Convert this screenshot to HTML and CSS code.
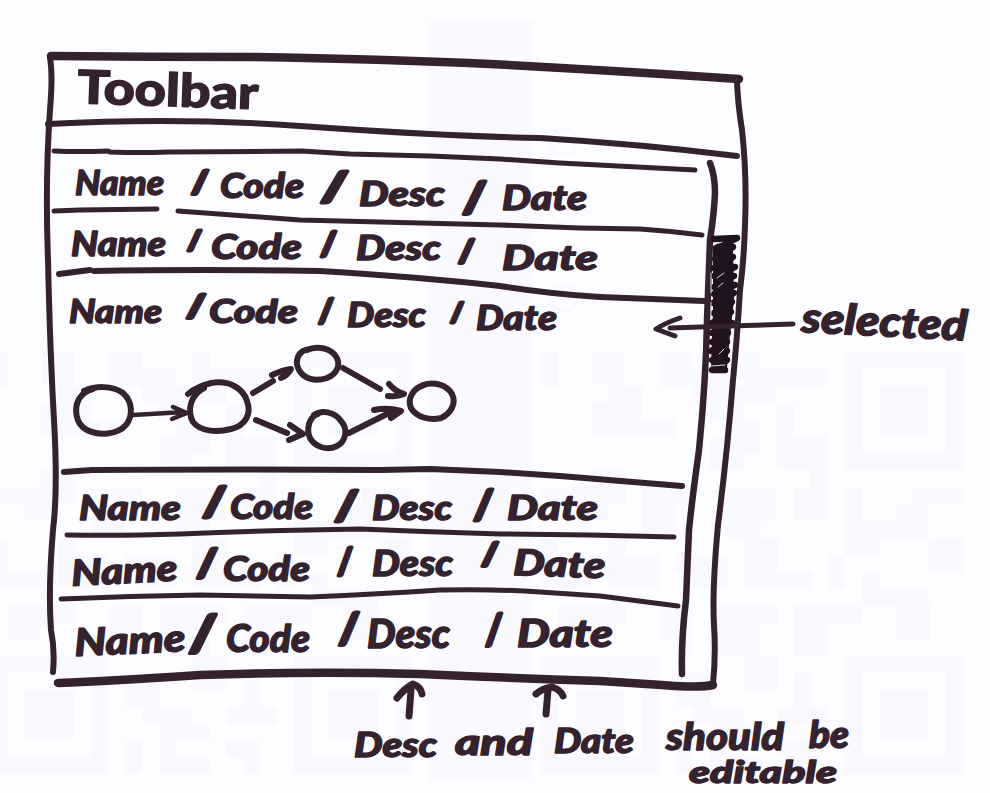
FILE: index.html
```html
<!DOCTYPE html>
<html lang="en">
<head>
<meta charset="utf-8">
<title>Toolbar</title>
<link rel="stylesheet" href="styles.css">
</head>
<body>
<main class="paper">
  <!-- Faint print showing through the paper -->
  <svg class="ghost" viewBox="0 0 990 793" aria-hidden="true">
    <rect class="band" x="427" y="20" width="107" height="762"/>
    <defs>
      <g id="finder"><path d="M0 0h118v118h-118zM17 17v84h84v-84z" fill-rule="evenodd"/><rect x="34" y="34" width="50" height="50"/></g>
      <g id="code">
        <use href="#finder" x="304"/><use href="#finder" x="304" y="304"/><use href="#finder" y="304"/>
        <path d="M0 0h17v34h-17zM52 0h32v34h17v50h-50v-34h17v-17h-16zM118 0h34v34h-34zM152 17h34v17h17v34h-34v-17h-17zM203 0h17v17h66v17h-50v17h-33zM101 68h33v17h-33zM186 68h34v34h-17v16h-34v-33h17zM236 51h17v33h33v51h-17v-17h-33zM0 135h34v17h-34zM51 118h34v34h-17v17h-34v-34h17zM101 135h51v17h-17v34h-34zM186 135h50v34h-16v17h-34zM253 135h34v34h-34zM304 135h17v34h34v-17h17v-17h50v17h-34v34h-50v17h-34zM0 186h17v34h34v17h-51zM68 186h17v17h33v34h-50zM135 203h51v34h-34v-17h-17zM203 186h34v34h34v17h-68zM287 203h17v34h-17zM321 220h17v17h50v17h-67zM388 186h34v34h-34zM17 254h68v17h-34v17h-34zM118 254h34v50h-17v-17h-17zM169 254h68v17h-17v34h-51zM253 254h68v17h-34v34h-34zM355 254h34v34h-34zM135 321h34v34h34v17h-51v-17h-17zM203 304h34v34h-34zM253 321h17v34h17v17h-50v-17h16zM135 389h17v33h-17zM169 372h51v17h-34v17h34v16h-51zM236 389h34v33h-17v-16h-17z"/>
      </g>
    </defs>
    <use href="#code" x="541" y="352"/><use href="#code" x="-10" y="352"/>
    <g class="ring"><circle cx="563" cy="142" r="13"/><circle cx="563" cy="208" r="14"/><circle cx="563" cy="298" r="13"/></g>
  </svg>

  <header class="strip toolbar">
    <svg viewBox="0 0 990 140">
      <g class="words upright">
        <text x="77" y="103" font-size="46" textLength="181" lengthAdjust="spacingAndGlyphs" transform="rotate(2 77 103)">Toolbar</text>
      </g>
      <path class="heavy" d="M51 56Q150 57 250 57Q380 59 490 64Q620 71 739 79"/>
      <path d="M48 124Q105 121 160 121Q230 121 300 126T430 134Q490 137 540 138Q640 144 737 156"/>
    </svg>
  </header>

  <section class="list">
    <div class="strip row">
      <svg viewBox="0 140 990 76">
        <path class="fine" d="M54 151Q80 152 108 151L110 152Q140 153 168 152L172 152Q240 152 302 151L350 154L430 156L500 159L560 163L695 170"/>
        <g class="words">
          <text x="75" y="195" font-size="34" textLength="89" lengthAdjust="spacingAndGlyphs">Name</text>
          <text class="bar" x="191" y="193" font-size="30" textLength="18" lengthAdjust="spacingAndGlyphs">/</text>
          <text x="220" y="198" font-size="34" textLength="84" lengthAdjust="spacingAndGlyphs">Code</text>
          <text class="bar" x="320" y="201" font-size="40" textLength="29" lengthAdjust="spacingAndGlyphs">/</text>
          <text x="359" y="206" font-size="34" textLength="86" lengthAdjust="spacingAndGlyphs">Desc</text>
          <text class="bar" x="462" y="212" font-size="41" textLength="25" lengthAdjust="spacingAndGlyphs">/</text>
          <text x="502" y="210" font-size="34" textLength="85" lengthAdjust="spacingAndGlyphs">Date</text>
        </g>
        <path class="fine" d="M54 211L80 210L157 209M178 211L260 217L300 220L500 225L580 228L640 229Q670 231 702 235"/>
      </svg>
    </div>
    <div class="strip row row-short">
      <svg viewBox="0 216 990 64">
        <g class="words">
          <text x="71" y="256" font-size="34" textLength="95" lengthAdjust="spacingAndGlyphs">Name</text>
          <text class="bar" x="187" y="250" font-size="27" textLength="15" lengthAdjust="spacingAndGlyphs">/</text>
          <text x="211" y="259" font-size="34" textLength="91" lengthAdjust="spacingAndGlyphs">Code</text>
          <text class="bar" x="320" y="255" font-size="33" textLength="17" lengthAdjust="spacingAndGlyphs">/</text>
          <text x="356" y="260" font-size="35" textLength="85" lengthAdjust="spacingAndGlyphs">Desc</text>
          <text class="bar" x="458" y="262" font-size="31" textLength="17" lengthAdjust="spacingAndGlyphs">/</text>
          <text x="502" y="270" font-size="35" textLength="96" lengthAdjust="spacingAndGlyphs">Date</text>
        </g>
        <path d="M59 274L90 270M94 271Q200 269 320 271Q420 277 500 286Q550 294 600 297L704 301"/>
      </svg>
    </div>
    <div class="strip row selected">
      <svg viewBox="0 280 990 190">
        <g class="words">
          <text x="69" y="323" font-size="33" textLength="93" lengthAdjust="spacingAndGlyphs">Name</text>
          <text class="bar" x="186" y="317" font-size="31" textLength="20" lengthAdjust="spacingAndGlyphs">/</text>
          <text x="209" y="323" font-size="32" textLength="89" lengthAdjust="spacingAndGlyphs">Code</text>
          <text class="bar" x="318" y="322" font-size="33" textLength="16" lengthAdjust="spacingAndGlyphs">/</text>
          <text x="347" y="327" font-size="35" textLength="79" lengthAdjust="spacingAndGlyphs">Desc</text>
          <text class="bar" x="450" y="322" font-size="27" textLength="14" lengthAdjust="spacingAndGlyphs">/</text>
          <text x="476" y="330" font-size="35" textLength="81" lengthAdjust="spacingAndGlyphs">Date</text>
          <text x="801" y="332" font-size="42" textLength="166" lengthAdjust="spacingAndGlyphs" transform="rotate(3 801 332)">selected</text>
        </g>
        <g class="graph">
          <path d="M84 391C95 386 112 385 123 393C133 402 133 416 126 425C117 435 99 436 87 430C75 424 74 408 79 399Q84 391 93 389"/>
          <path d="M188 394Q198 386 211 383C229 380 243 388 247 401C252 414 245 426 231 429C216 433 200 431 193 422C187 411 190 395 204 388"/>
          <path d="M307 350C315 346 328 347 335 355C342 364 337 374 327 378C315 382 304 379 299 370C294 361 298 350 310 349"/>
          <path d="M314 415C321 410 334 411 341 421C349 430 345 442 337 446C327 451 315 447 310 438C306 429 309 417 318 414"/>
          <path d="M423 385C434 381 447 385 452 394C457 404 450 414 441 418C430 421 416 417 411 408C407 399 413 388 424 385"/>
          <path class="fine" d="M133 415L184 412M173 407L187 413L172 419"/>
          <path d="M253 393L273 381M272 375Q283 370 291 369Q287 376 281 378M256 420L287 433M290 425L303 434L289 440M343 368L380 389M389 384Q396 392 404 394Q397 397 388 396M349 433L393 411M374 410Q387 407 401 411L391 418"/>
        </g>
        <path d="M64 472L92 470Q250 469 380 470L430 469L500 472L560 476L682 486"/>
      </svg>
    </div>
    <div class="strip row">
      <svg viewBox="0 470 990 65">
        <g class="words">
          <text x="79" y="520" font-size="35" textLength="102" lengthAdjust="spacingAndGlyphs">Name</text>
          <text class="bar" x="202" y="516" font-size="40" textLength="25" lengthAdjust="spacingAndGlyphs">/</text>
          <text x="230" y="519" font-size="34" textLength="83" lengthAdjust="spacingAndGlyphs">Code</text>
          <text class="bar" x="334" y="520" font-size="40" textLength="25" lengthAdjust="spacingAndGlyphs">/</text>
          <text x="372" y="520" font-size="34" textLength="80" lengthAdjust="spacingAndGlyphs">Desc</text>
          <text class="bar" x="473" y="519" font-size="40" textLength="21" lengthAdjust="spacingAndGlyphs">/</text>
          <text x="507" y="520" font-size="35" textLength="91" lengthAdjust="spacingAndGlyphs">Date</text>
        </g>
        <path class="fine" d="M67 535Q120 536 180 534Q280 530 360 529Q430 532 500 534L590 535L674 537"/>
      </svg>
    </div>
    <div class="strip row row-short">
      <svg viewBox="0 535 990 63">
        <g class="words">
          <text x="72" y="586" font-size="36" textLength="106" lengthAdjust="spacingAndGlyphs" transform="rotate(-3 72 586)">Name</text>
          <text class="bar" x="196" y="576" font-size="38" textLength="22" lengthAdjust="spacingAndGlyphs">/</text>
          <text x="223" y="581" font-size="35" textLength="87" lengthAdjust="spacingAndGlyphs">Code</text>
          <text class="bar" x="337" y="574" font-size="36" textLength="16" lengthAdjust="spacingAndGlyphs">/</text>
          <text x="372" y="576" font-size="36" textLength="81" lengthAdjust="spacingAndGlyphs">Desc</text>
          <text class="bar" x="481" y="565" font-size="31" textLength="18" lengthAdjust="spacingAndGlyphs">/</text>
          <text x="513" y="575" font-size="36" textLength="92" lengthAdjust="spacingAndGlyphs" transform="rotate(2 513 575)">Date</text>
        </g>
        <path class="fine" d="M61 599Q130 596 200 595Q250 596 310 597Q380 594 440 590Q500 589 540 592L600 596L678 606"/>
      </svg>
    </div>
    <div class="strip row row-last">
      <svg viewBox="0 598 990 82">
        <g class="words">
          <text x="75" y="656" font-size="38" textLength="111" lengthAdjust="spacingAndGlyphs" transform="rotate(-2.5 75 656)">Name</text>
          <text class="bar" x="188" y="651" font-size="50" textLength="30" lengthAdjust="spacingAndGlyphs">/</text>
          <text x="226" y="652" font-size="38" textLength="84" lengthAdjust="spacingAndGlyphs">Code</text>
          <text class="bar" x="338" y="643" font-size="41" textLength="22" lengthAdjust="spacingAndGlyphs">/</text>
          <text x="367" y="648" font-size="40" textLength="83" lengthAdjust="spacingAndGlyphs">Desc</text>
          <text class="bar" x="485" y="644" font-size="42" textLength="18" lengthAdjust="spacingAndGlyphs">/</text>
          <text x="517" y="647" font-size="37" textLength="96" lengthAdjust="spacingAndGlyphs">Date</text>
        </g>
        <path class="heavy" d="M58 683Q110 681 200 675Q310 671 420 674Q510 678 600 681L662 685Q700 688 713 685"/>
      </svg>
    </div>
  </section>

  <footer class="strip notes">
    <svg viewBox="0 680 990 113">
      <path class="heavy arrow" d="M409 716L411 690M397 698Q405 688 413 684Q421 687 422 694M546 714L548 690M536 694Q543 688 552 687Q561 690 563 696"/>
      <g class="words">
        <text x="354" y="757" font-size="34" textLength="83" lengthAdjust="spacingAndGlyphs">Desc</text>
        <text x="455" y="755" font-size="36" textLength="78" lengthAdjust="spacingAndGlyphs">and</text>
        <text x="554" y="753" font-size="35" textLength="80" lengthAdjust="spacingAndGlyphs">Date</text>
        <text x="666" y="750" font-size="38" textLength="118" lengthAdjust="spacingAndGlyphs">should</text>
        <text x="809" y="748" font-size="38" textLength="40" lengthAdjust="spacingAndGlyphs">be</text>
        <text x="689" y="783" font-size="31" textLength="148" lengthAdjust="spacingAndGlyphs">editable</text>
      </g>
    </svg>
  </footer>

  <!-- Window sides, scrollbar and callout arrow drawn over the rows -->
  <svg class="frame" viewBox="0 0 990 793" aria-hidden="true">
    <path d="M50 58Q53 75 50 110Q45 180 48 260Q50 350 54 420T53 530Q48 590 51 630Q55 650 53 672"/>
    <path d="M737 82Q738 105 742 130Q747 175 745 225Q744 260 740 290Q737 340 733 380Q727 455 718 525Q712 590 714 625Q716 655 713 684"/>
    <path class="track" d="M710 163Q715 175 715 193Q714 215 710 240L707 320Q706 380 699 450Q692 500 689 530L686 600Q681 640 682 674"/>
    <path class="thumb-fill" d="M713 250L733 246L734 300L730 335L727 368L711 367L713 310Z"/>
    <path class="thumb" d="M714 239L737 238L716 248L733 247L715 259L733 257L714 268L735 267L714 276L734 276L714 287L735 285L714 294L734 293L713 303L732 302L714 313L731 312L712 323L732 323L712 333L728 333L712 342L727 342L711 351L727 351L712 360L727 360L712 370L725 370"/>
    <path class="glint" d="M717 278l7-5M718 287l5-4M711 273v20M719 354l5-5M711 302v12M711 366l14-1M716 244l6-2"/>
    <path class="fine" d="M670 328L730 326L793 324M680 318Q665 323 656 329L675 336"/>
  </svg>
</main>
</body>
</html>
```
FILE: styles.css
```css
body {
  margin: 0;
  background: #fdfdff;
}

.paper {
  position: relative;
  display: flex;
  flex-direction: column;
  width: 990px;
  height: 793px;
  overflow: hidden;
}

.list {
  display: flex;
  flex-direction: column;
}

.strip {
  position: relative;
  flex: none;
}

.toolbar { height: 140px; }
.row { height: 65px; }
.row:first-child { height: 76px; }
.row-short { height: 64px; }
.row-short:nth-child(5) { height: 63px; }
.selected { height: 190px; }
.row-last { height: 82px; }
.notes { height: 113px; }

svg {
  display: block;
  width: 100%;
  height: 100%;
  overflow: visible;
}

path {
  fill: none;
  stroke: #34232f;
  stroke-width: 6;
  stroke-linecap: round;
  stroke-linejoin: round;
}

.fine { stroke-width: 5; }
.heavy { stroke-width: 8.5; }
.track { stroke-width: 6.5; }
.arrow { stroke-width: 7; }
.graph path { stroke-width: 6; }
.graph .fine { stroke-width: 4.5; }
.thumb { stroke: #20131f; stroke-width: 6.5; }
.thumb-fill { fill: #20131f; stroke: none; }
.glint { stroke: #d8d2df; stroke-width: 1; }

.words {
  font-family: Lato, "Open Sans", sans-serif;
  font-weight: 900;
  font-style: italic;
  fill: #34232f;
  stroke: #34232f;
  stroke-width: 1.4;
  stroke-linejoin: round;
}

.upright { font-style: normal; }

.bar {
  font-style: normal;
  stroke-width: 3;
}

.ghost,
.frame {
  position: absolute;
  inset: 0;
  pointer-events: none;
}

.ghost path,
.ghost rect {
  fill: #f9f9fd;
  stroke: none;
}

.ghost .band { fill: #faf9fe; }

.ring circle {
  fill: none;
  stroke: #fafafe;
  stroke-width: 5;
}
```
